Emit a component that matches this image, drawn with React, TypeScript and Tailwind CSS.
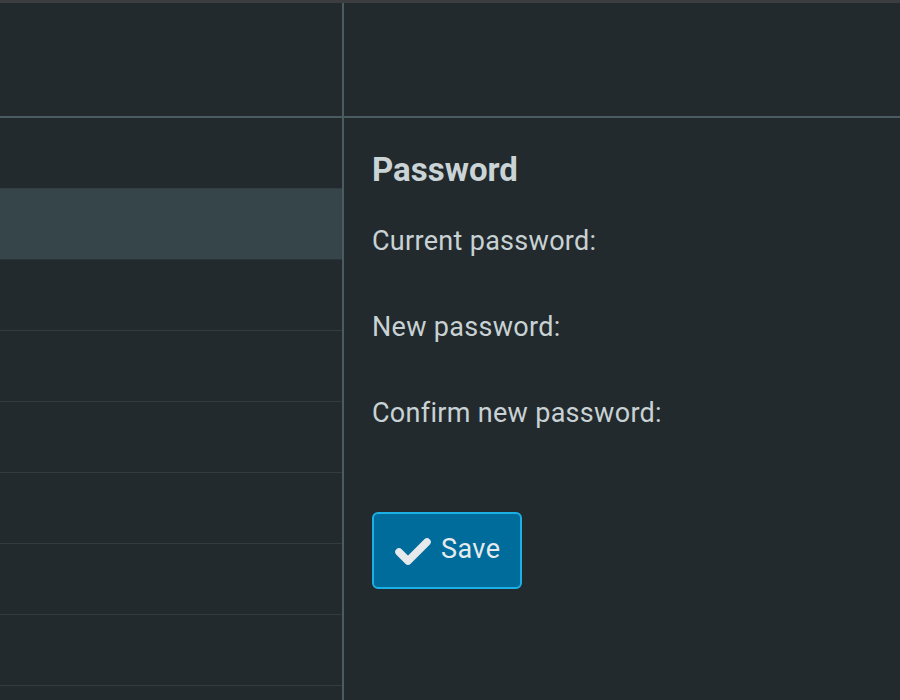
import React from "react";

export default function App() {
  const rows = [false, true, false, false, false, false, false, false];
  return (
    <div
      className="w-[900px] h-[700px] overflow-hidden bg-[#222a2d] flex flex-col"
      style={{ fontFamily: "Roboto, 'Liberation Sans', sans-serif" }}
    >
      <div className="h-[3px] bg-[#3c3d3e] shrink-0" />
      <div className="flex flex-1 min-h-0">
        <div className="w-[342px] flex flex-col shrink-0">
          <div className="h-[113px] shrink-0" />
          <div className="h-[2px] bg-[#4a5c61] shrink-0" />
          {rows.map((hl, i) => (
            <div
              key={i}
              className={
                hl
                  ? "h-[71px] shrink-0 bg-[#36454a] border-b border-[#2b3538]"
                  : "h-[71px] shrink-0 border-b border-[#323d40]"
              }
            />
          ))}
        </div>
        <div className="w-[2px] bg-[#4a5c61] shrink-0" />
        <div className="flex-1 flex flex-col">
          <div className="h-[113px] shrink-0" />
          <div className="h-[2px] bg-[#4a5c61] shrink-0" />
          <div className="flex flex-col pl-[28px] pt-[33px]">
            <h2 className="text-[33px] leading-[38px] font-bold text-[#cad4d6]">Password</h2>
            <div className="flex flex-col gap-[56px] mt-[37px] text-[27px] leading-[30px] tracking-[0.3px] text-[#c8d2d4]">
              <div>Current password:</div>
              <div>New password:</div>
              <div>Confirm new password:</div>
            </div>
            <button className="mt-[84px] w-[150px] h-[77px] rounded-[6px] border-2 border-[#1bb0e6] bg-[#006c9c] flex items-center pl-[18px] pb-[3px] gap-[9px] text-[27px] leading-[30px] tracking-[0.4px] text-[#e6eaec]">
              <svg width="40" height="32" viewBox="0 0 40 32" className="shrink-0 mt-[4px]">
                <polyline
                  points="7,17 16,26 35,7"
                  fill="none"
                  stroke="#e6eaec"
                  strokeWidth="7.5"
                  strokeLinecap="round"
                  strokeLinejoin="round"
                />
              </svg>
              <span>Save</span>
            </button>
          </div>
        </div>
      </div>
    </div>
  );
}
